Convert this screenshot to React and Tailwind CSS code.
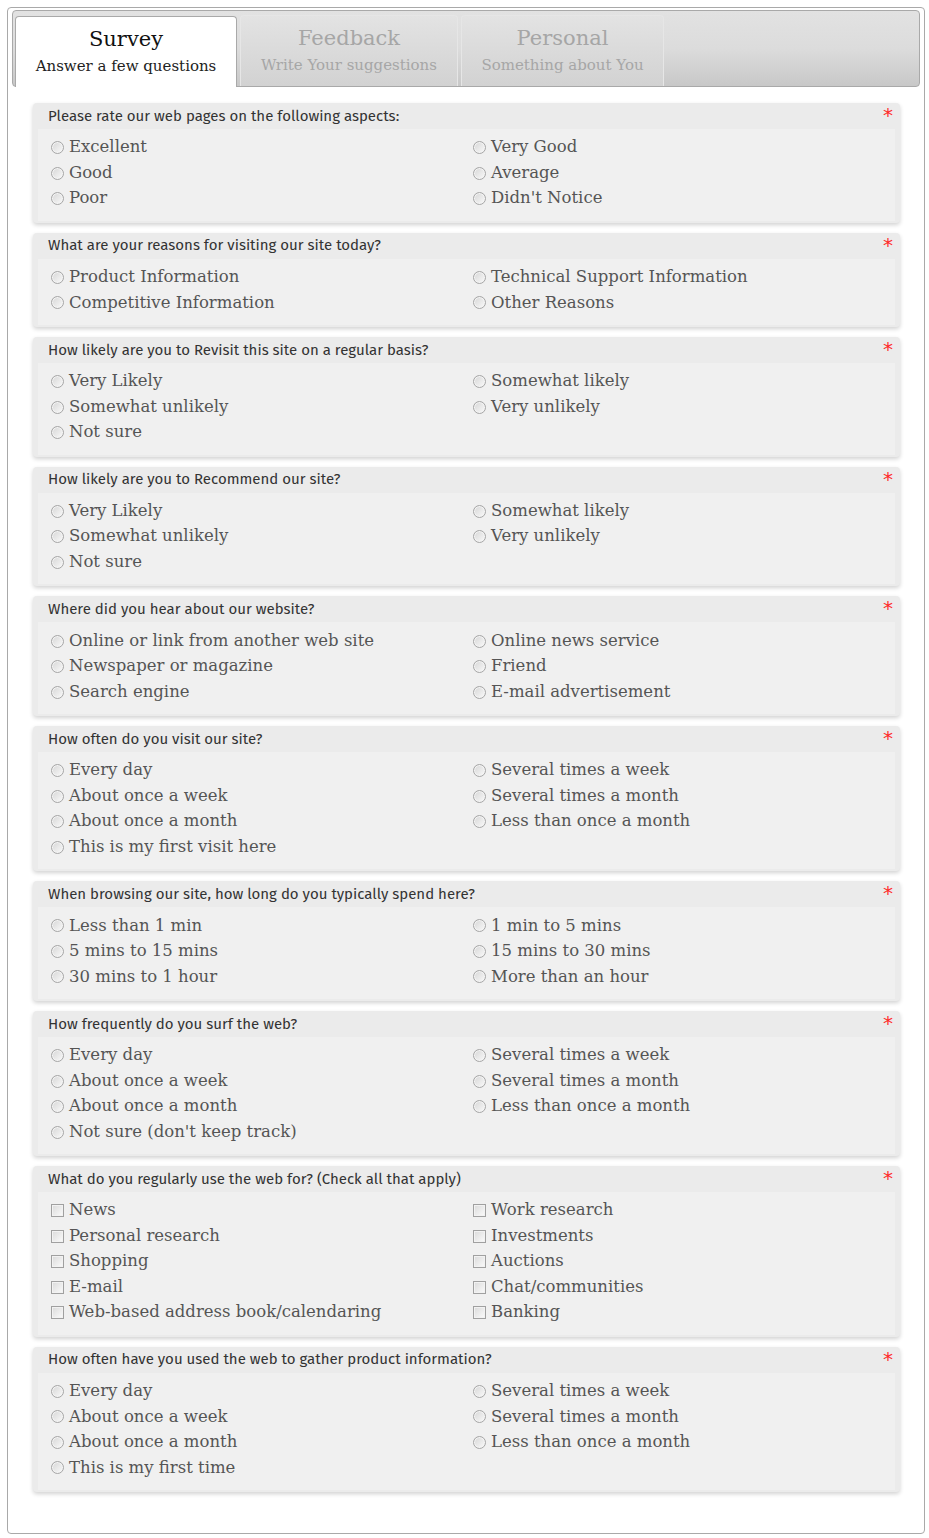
import React from "react";

const sections = [
  { q: "Please rate our web pages on the following aspects:", type: "radio", opts: ["Excellent", "Very Good", "Good", "Average", "Poor", "Didn't Notice"] },
  { q: "What are your reasons for visiting our site today?", type: "radio", opts: ["Product Information", "Technical Support Information", "Competitive Information", "Other Reasons"] },
  { q: "How likely are you to Revisit this site on a regular basis?", type: "radio", opts: ["Very Likely", "Somewhat likely", "Somewhat unlikely", "Very unlikely", "Not sure"] },
  { q: "How likely are you to Recommend our site?", type: "radio", opts: ["Very Likely", "Somewhat likely", "Somewhat unlikely", "Very unlikely", "Not sure"] },
  { q: "Where did you hear about our website?", type: "radio", opts: ["Online or link from another web site", "Online news service", "Newspaper or magazine", "Friend", "Search engine", "E-mail advertisement"] },
  { q: "How often do you visit our site?", type: "radio", opts: ["Every day", "Several times a week", "About once a week", "Several times a month", "About once a month", "Less than once a month", "This is my first visit here"] },
  { q: "When browsing our site, how long do you typically spend here?", type: "radio", opts: ["Less than 1 min", "1 min to 5 mins", "5 mins to 15 mins", "15 mins to 30 mins", "30 mins to 1 hour", "More than an hour"] },
  { q: "How frequently do you surf the web?", type: "radio", opts: ["Every day", "Several times a week", "About once a week", "Several times a month", "About once a month", "Less than once a month", "Not sure (don't keep track)"] },
  { q: "What do you regularly use the web for? (Check all that apply)", type: "check", opts: ["News", "Work research", "Personal research", "Investments", "Shopping", "Auctions", "E-mail", "Chat/communities", "Web-based address book/calendaring", "Banking"] },
  { q: "How often have you used the web to gather product information?", type: "radio", opts: ["Every day", "Several times a week", "About once a week", "Several times a month", "About once a month", "Less than once a month", "This is my first time"] },
];

function Radio() {
  return (
    <span className="inline-block w-[13px] h-[13px] rounded-full border border-[#a6a6a6] bg-gradient-to-br from-[#d6d6d6] to-[#fafafa] shadow-[inset_0_0_0_1px_#f4f4f4] shrink-0 mr-[5px]" />
  );
}

function Check() {
  return (
    <span className="inline-block w-[13px] h-[13px] border border-[#a0a0a0] bg-gradient-to-br from-[#dadada] to-[#fbfbfb] shadow-[inset_0_0_0_1px_#f2f2f2] shrink-0 mr-[5px]" />
  );
}

function Section({ s }) {
  return (
    <div className="relative bg-[#ebebeb] rounded-[4px] shadow-[0_2px_4px_rgba(0,0,0,0.18)] px-[5px] pb-[2px]">
      <div className="h-[26px] flex items-center pl-[10px] text-[15px] text-[#333] font-['Fira_Sans','Open_Sans','Noto_Sans',sans-serif]">
        {s.q}
      </div>
      <span className="absolute right-[7px] top-[2px] text-[#ff2a2a] text-[20px] leading-none font-['DejaVu_Sans',sans-serif]">*</span>
      <div className="bg-[#f0f0f0] pl-[13px] pt-[6px] pb-[9.2px] grid grid-cols-2 font-['DejaVu_Serif',serif] text-[16.5px] text-[#555]">
        {s.opts.map((o, i) => (
          <div key={i} className="h-[25.5px] flex items-center">
            {s.type === "radio" ? <Radio /> : <Check />}
            <span className="whitespace-nowrap">{o}</span>
          </div>
        ))}
      </div>
    </div>
  );
}

export default function App() {
  return (
    <div className="bg-white w-[929px] h-[1538px] pt-[7px] pl-[7px]">
      <div className="w-[918px] h-[1527px] border border-[#a9a9a9] rounded-[4px] px-[4px] pt-[2px]">
        <div className="h-[77px] border border-[#a9a9a9] rounded-[4px] bg-gradient-to-b from-[#e2e2e2] via-[#dcdcdc] to-[#c8c8c8] flex items-end pl-[2px] gap-[3px] font-['DejaVu_Serif',serif]">
          <div className="w-[222px] h-[71px] bg-white border border-b-0 border-[#a9a9a9] rounded-t-[4px] -mb-px flex flex-col items-center pt-[8px]">
            <div className="text-[21px] text-[#111] leading-[28px]">Survey</div>
            <div className="text-[15px] text-[#222] leading-[22px] mt-[2px]">Answer a few questions</div>
          </div>
          <div className="w-[218px] h-[71px] bg-gradient-to-b from-[#e3e3e3] to-[#d2d2d2] border border-b-0 border-[#e6e6e6] rounded-t-[4px] flex flex-col items-center pt-[8px]">
            <div className="text-[21px] text-[#a6a6a6] leading-[28px]">Feedback</div>
            <div className="text-[15px] text-[#a6a6a6] leading-[22px] mt-[2px]">Write Your suggestions</div>
          </div>
          <div className="w-[203px] h-[71px] bg-gradient-to-b from-[#e3e3e3] to-[#d2d2d2] border border-b-0 border-[#e6e6e6] rounded-t-[4px] flex flex-col items-center pt-[8px]">
            <div className="text-[21px] text-[#a6a6a6] leading-[28px]">Personal</div>
            <div className="text-[15px] text-[#a6a6a6] leading-[22px] mt-[2px]">Something about You</div>
          </div>
        </div>
        <div className="mt-[16px] ml-[21px] w-[867px] flex flex-col gap-[10px]">
          {sections.map((s, i) => (
            <Section key={i} s={s} />
          ))}
        </div>
      </div>
    </div>
  );
}
